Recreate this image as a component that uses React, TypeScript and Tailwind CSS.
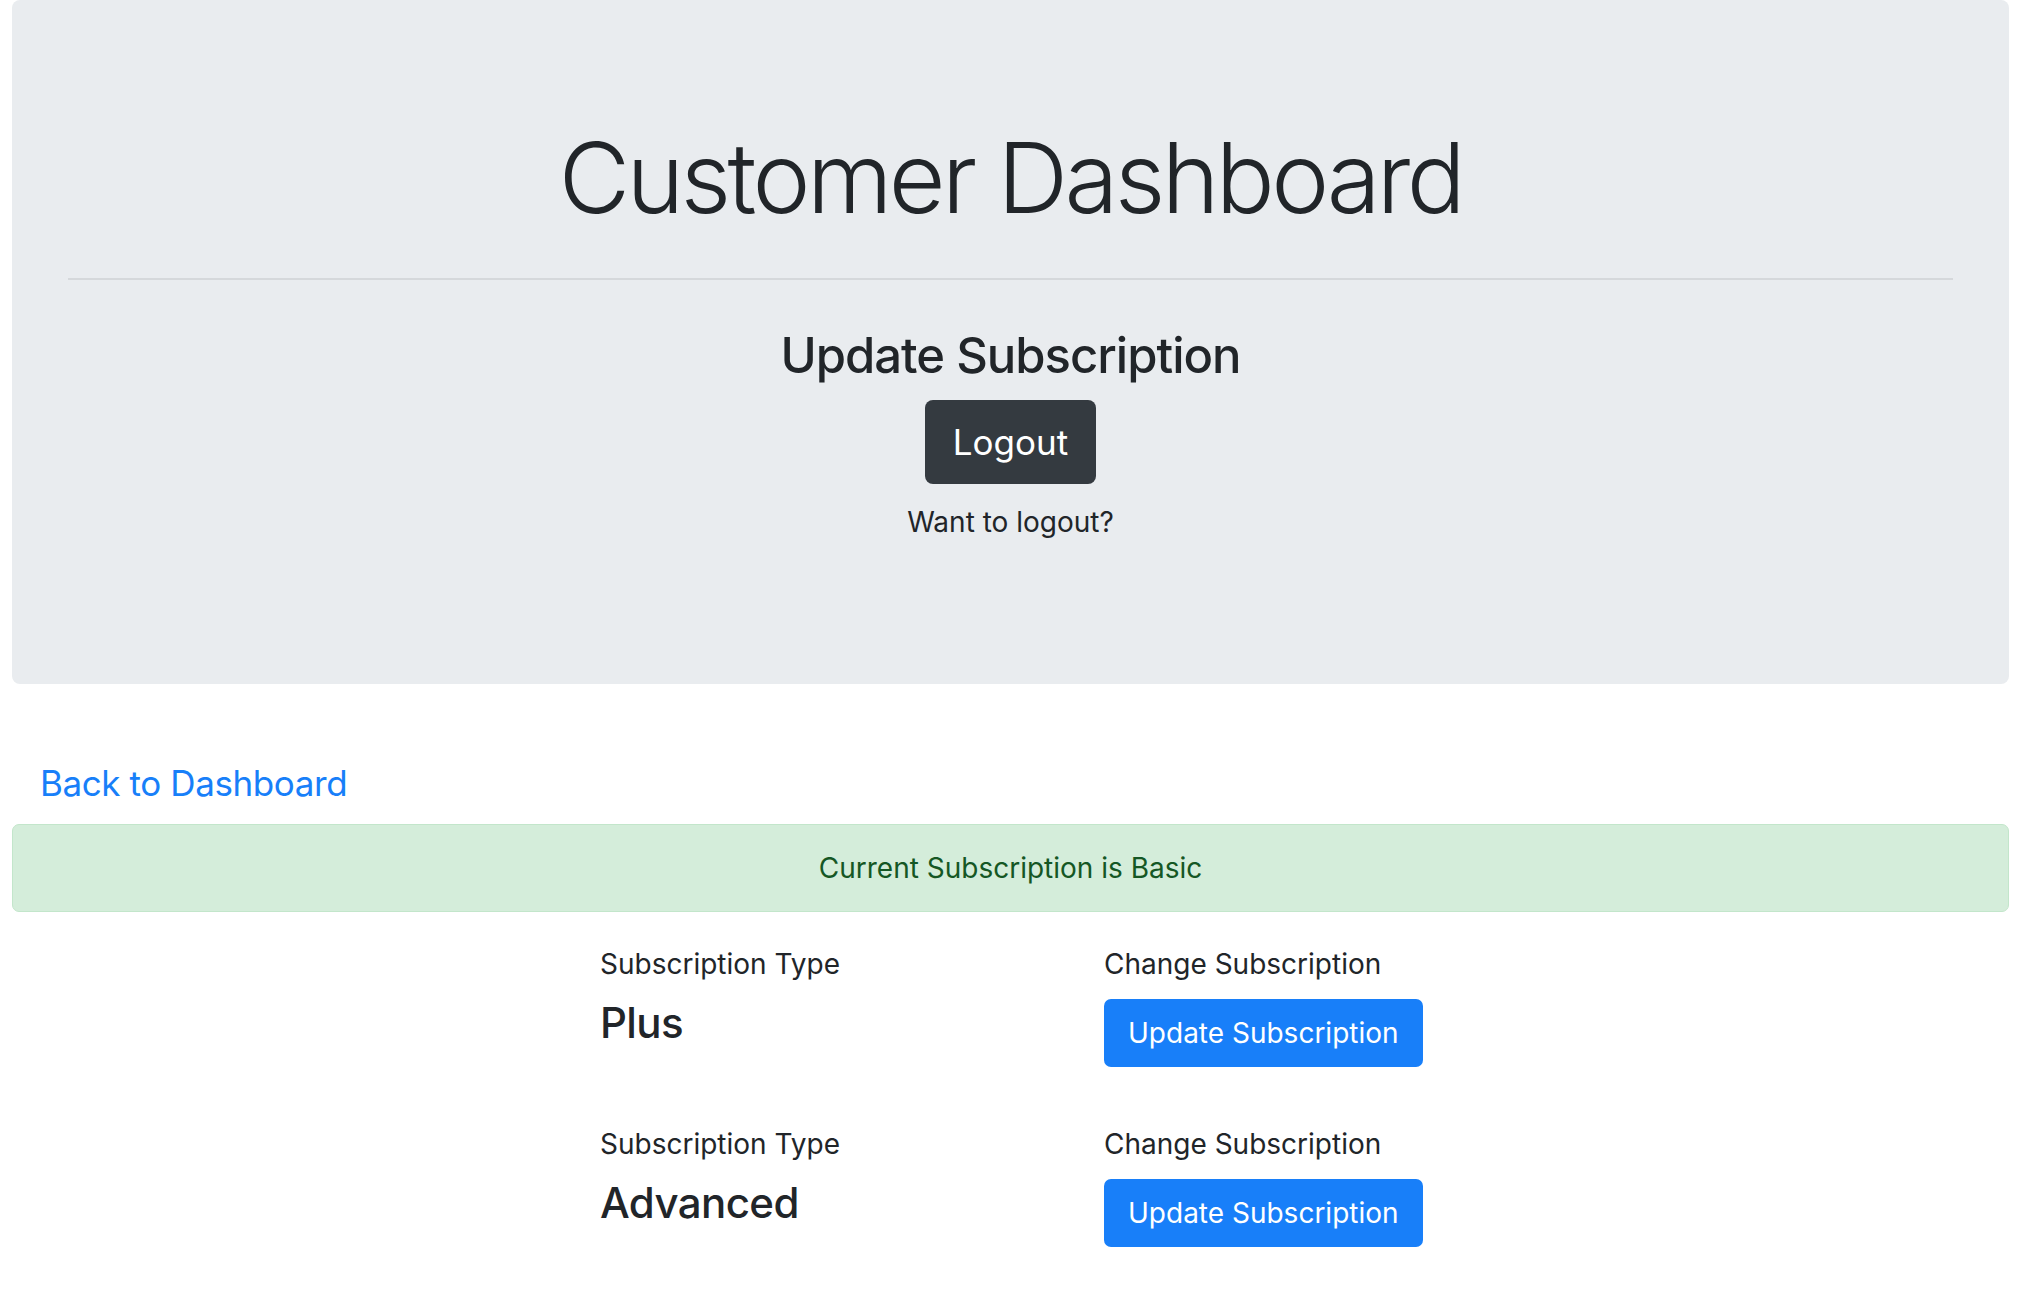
export default function App() {
  const plans = ['Plus', 'Advanced'];

  return (
    <div className="min-h-screen bg-white font-['Inter','Liberation_Sans',sans-serif] text-[#212529]">
      <div className="pl-[12px] pr-[29px]">
        {/* Jumbotron */}
        <div className="flex flex-col items-center rounded-[8px] bg-[#e9ecef] px-[56px] pt-[119px] pb-[141px] text-center">
          <h1 className="text-[98px] font-light leading-[118px] tracking-[-3.6px]">Customer Dashboard</h1>
          <hr className="mt-[41px] w-full border-t-2 border-[#d5d8db]" />
          <h3 className="mt-[46px] text-[49px] font-medium leading-[59px] tracking-[-1px]">Update Subscription</h3>
          <button className="mt-[15px] rounded-[8px] bg-[#343a40] px-[28px] py-[16px] text-[35px] leading-[52px] text-white">
            Logout
          </button>
          <p className="mt-[17px] text-[28px] leading-[42px]">Want to logout?</p>
        </div>

        {/* Back link */}
        <div className="mt-[73px] pl-[28px]">
          <a href="#" className="text-[35px] leading-[52px] tracking-[-0.4px] text-[#187ff9]">Back to Dashboard</a>
        </div>

        {/* Current plan */}
        <div className="mt-[15px] rounded-[7px] border-[1.5px] border-[#c3e6cb] bg-[#d4edda] py-[22px] text-center text-[28px] leading-[42px] text-[#155724]">
          Current Subscription is Basic
        </div>

        {/* Plans */}
        <div className="mt-[31px] pl-[588px]">
          {plans.map(plan => (
            <div key={plan} className="mb-[56px] grid grid-cols-[504px_504px]">
              <div>
                <div className="text-[28px] leading-[42px]">Subscription Type</div>
                <div className="mt-[13px] text-[42px] font-medium leading-[50px] tracking-[-0.6px]">{plan}</div>
              </div>
              <div>
                <div className="text-[28px] leading-[42px]">Change Subscription</div>
                <button className="mt-[14px] rounded-[7px] bg-[#187ff9] px-[24px] py-[13px] text-[28px] leading-[42px] text-white">
                  Update Subscription
                </button>
              </div>
            </div>
          ))}
        </div>
      </div>
    </div>
  );
}
